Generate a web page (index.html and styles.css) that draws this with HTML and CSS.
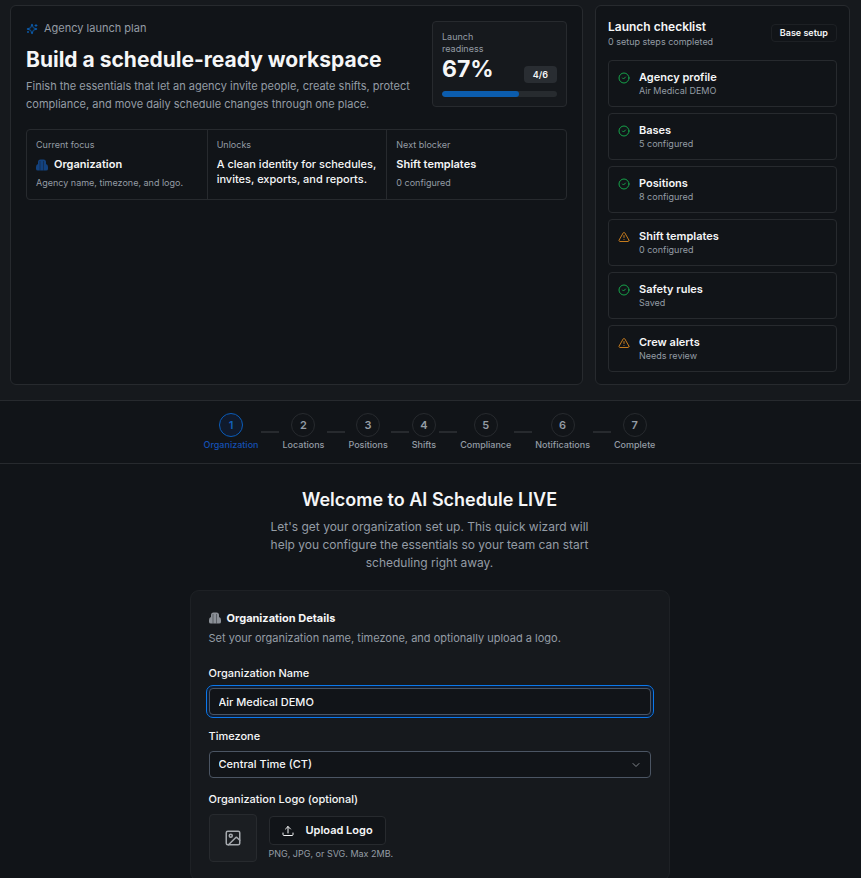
FILE: index.html
```html
<!DOCTYPE html>
<html lang="en">
<head>
<meta charset="utf-8">
<meta name="viewport" content="width=device-width, initial-scale=1">
<title>Agency setup</title>
<link rel="stylesheet" href="styles.css">
</head>
<body>
<svg class="sprite" aria-hidden="true">
  <symbol id="check" viewBox="0 0 24 24"><circle cx="12" cy="12" r="10"/><path d="m9 12 2 2 4-4"/></symbol>
  <symbol id="warn" viewBox="0 0 24 24"><path d="m21.73 18-8-14a2 2 0 0 0-3.48 0l-8 14A2 2 0 0 0 4 21h16a2 2 0 0 0 1.73-3Z"/><path d="M12 9v4M12 17h.01"/></symbol>
  <symbol id="building" viewBox="0 0 24 24"><path class="solid" d="M4 23V6q0-5 5-5h6q5 0 5 5v17Z"/><path class="solid" d="M4 10q-4 1-4 6v4q0 3 4 3ZM20 10q4 1 4 6v4q0 3-4 3Z"/><path class="seam" d="M8 4v19M15 4v19"/></symbol>
</svg>
<header class="overview">
  <section class="panel plan">
    <div class="plan-top">
      <div class="intro">
        <p class="eyebrow"><svg class="icon spark" viewBox="0 0 24 24" aria-hidden="true"><path d="M9.94 15.5A2 2 0 0 0 8.5 14.06l-6.14-1.58a.5.5 0 0 1 0-.96L8.5 9.94A2 2 0 0 0 9.94 8.5l1.58-6.14a.5.5 0 0 1 .96 0l1.58 6.14a2 2 0 0 0 1.44 1.44l6.14 1.58a.5.5 0 0 1 0 .96l-6.14 1.58a2 2 0 0 0-1.44 1.44l-1.58 6.14a.5.5 0 0 1-.96 0zM20 3v4M22 5h-4M4 17v2M5 18H3"/></svg>Agency launch plan</p>
        <h1>Build a schedule-ready workspace</h1>
        <p class="lead">Finish the essentials that let an agency invite people, create shifts, protect compliance, and move daily schedule changes through one place.</p>
      </div>
      <div class="readiness">
        <p class="small">Launch<br>readiness</p>
        <div class="score"><strong>67%</strong><span class="count">4/6</span></div>
        <div class="track"><div class="fill" style="width:67%"></div></div>
      </div>
    </div>
    <div class="facts">
      <div class="fact"><p class="small">Current focus</p><p class="value strong"><svg class="icon building blue" aria-hidden="true"><use href="#building"/></svg>Organization</p><p class="small">Agency name, timezone, and logo.</p></div>
      <div class="fact"><p class="small">Unlocks</p><p class="value">A clean identity for schedules, invites, exports, and reports.</p></div>
      <div class="fact"><p class="small">Next blocker</p><p class="value strong">Shift templates</p><p class="small">0 configured</p></div>
    </div>
  </section>
  <section class="panel checklist">
    <div class="checklist-head">
      <div><h2>Launch checklist</h2><p class="small">0 setup steps completed</p></div>
      <span class="tag">Base setup</span>
    </div>
    <ul>
      <li><svg class="icon ok" aria-hidden="true"><use href="#check"/></svg><div><h3>Agency profile</h3><p class="small">Air Medical DEMO</p></div></li>
      <li><svg class="icon ok" aria-hidden="true"><use href="#check"/></svg><div><h3>Bases</h3><p class="small">5 configured</p></div></li>
      <li><svg class="icon ok" aria-hidden="true"><use href="#check"/></svg><div><h3>Positions</h3><p class="small">8 configured</p></div></li>
      <li><svg class="icon todo" aria-hidden="true"><use href="#warn"/></svg><div><h3>Shift templates</h3><p class="small">0 configured</p></div></li>
      <li><svg class="icon ok" aria-hidden="true"><use href="#check"/></svg><div><h3>Safety rules</h3><p class="small">Saved</p></div></li>
      <li><svg class="icon todo" aria-hidden="true"><use href="#warn"/></svg><div><h3>Crew alerts</h3><p class="small">Needs review</p></div></li>
    </ul>
  </section>
</header>
<nav class="steps" aria-label="Setup steps">
  <div class="step current"><span class="num">1</span><span>Organization</span></div><i class="link"></i>
  <div class="step"><span class="num">2</span><span>Locations</span></div><i class="link"></i>
  <div class="step"><span class="num">3</span><span>Positions</span></div><i class="link"></i>
  <div class="step"><span class="num">4</span><span>Shifts</span></div><i class="link"></i>
  <div class="step"><span class="num">5</span><span>Compliance</span></div><i class="link"></i>
  <div class="step"><span class="num">6</span><span>Notifications</span></div><i class="link"></i>
  <div class="step"><span class="num">7</span><span>Complete</span></div>
</nav>
<main>
  <h2 class="welcome">Welcome to AI Schedule LIVE</h2>
  <p class="welcome-text">Let's get your organization set up. This quick wizard will help you configure the essentials so your team can start scheduling right away.</p>
  <form class="card">
    <h3 class="card-title"><svg class="icon building" aria-hidden="true"><use href="#building"/></svg>Organization Details</h3>
    <p class="card-text">Set your organization name, timezone, and optionally upload a logo.</p>
    <div class="field">
      <label for="name">Organization Name</label>
      <input id="name" class="control focused" type="text" value="Air Medical DEMO">
    </div>
    <div class="field">
      <label for="zone">Timezone</label>
      <div class="select">
        <select id="zone" class="control"><option>Central Time (CT)</option></select>
        <svg class="icon chevron" viewBox="0 0 24 24" aria-hidden="true"><path d="m6 9 6 6 6-6"/></svg>
      </div>
    </div>
    <div class="field">
      <label for="upload">Organization Logo (optional)</label>
      <div class="logo-row">
        <div class="preview"><svg class="icon image" viewBox="0 0 24 24" aria-hidden="true"><rect x="3" y="3" width="18" height="18" rx="2"/><circle cx="9" cy="9" r="2"/><path d="m21 15-3.1-3.1a2 2 0 0 0-2.8 0L6 21"/></svg></div>
        <div>
          <button id="upload" type="button"><svg class="icon" viewBox="0 0 24 24" aria-hidden="true"><path d="M12 16V3M7 8l5-5 5 5M2 16v3a2 2 0 0 0 2 2h16a2 2 0 0 0 2-2v-3"/></svg>Upload Logo</button>
          <p class="small">PNG, JPG, or SVG. Max 2MB.</p>
        </div>
      </div>
    </div>
  </form>
</main>
</body>
</html>
```
FILE: styles.css
```css
* { box-sizing: border-box; margin: 0; padding: 0; }
:root {
  --bg: #111418;
  --raised: #16191d;
  --line: #272a2e;
  --text: #f5f6f7;
  --muted: #949ca5;
  --blue: #0b5cad;
}
html { overflow: hidden; }
body { background: var(--bg); color: var(--text); font: 11px/15px Inter, sans-serif; }
ul { list-style: none; }
.sprite { position: absolute; width: 0; height: 0; }
.icon { width: 12px; height: 12px; flex: none; fill: none; stroke: currentColor; stroke-width: 2; stroke-linecap: round; stroke-linejoin: round; }
.small { font-size: 9px; line-height: 12px; color: var(--muted); }

.overview { display: grid; grid-template-columns: minmax(0, 1fr) 255px; gap: 12px; padding: 5px 11px 15px 10px; background: var(--raised); border-bottom: 1px solid var(--line); }
.panel { background: var(--bg); border: 1px solid var(--line); border-radius: 6px; }
.plan { padding: 15px; }
.plan-top { display: flex; justify-content: space-between; gap: 16px; margin-bottom: 16px; }
.intro { flex: 1; }
.eyebrow { display: flex; align-items: center; gap: 6px; color: var(--muted); }
.spark { color: var(--blue); }
h1 { margin-top: 9px; font-size: 21px; line-height: 30px; font-weight: 700; }
.lead { margin-top: 2px; line-height: 18px; color: var(--muted); }
.readiness { width: 135px; height: 86px; padding: 9px; background: var(--raised); border: 1px solid var(--line); border-radius: 4px; }
.score { display: flex; justify-content: space-between; align-items: flex-end; height: 28px; }
.score strong { font-size: 23px; line-height: 28px; }
.count { padding: 2px 9px; border-radius: 4px; background: #292d32; font-size: 9px; line-height: 13px; font-weight: 600; }
.track { height: 6px; margin-top: 8px; border-radius: 3px; background: #272b2f; overflow: hidden; }
.fill { height: 100%; border-radius: 3px; background: var(--blue); }
.facts { display: grid; grid-template-columns: repeat(3, 1fr); border: 1px solid var(--line); border-radius: 4px; }
.fact { padding: 9px 9px 10px; }
.fact + .fact { border-left: 1px solid var(--line); }
.value { display: flex; align-items: center; gap: 6px; margin-top: 6px; font-weight: 500; }
.strong { margin-bottom: 5px; font-weight: 600; }
.building { color: #8b9097; }
.building.blue { color: #13427f; }
.solid { fill: currentColor; stroke: none; }
.seam { stroke: var(--bg); stroke-opacity: .4; stroke-linecap: butt; }

.checklist { padding: 12px; }
.checklist-head { display: flex; justify-content: space-between; align-items: center; margin-bottom: 12px; }
.checklist-head h2 { font-size: 12px; line-height: 18px; font-weight: 600; }
.tag { padding: 1px 8px; border: 1px solid #1d2024; border-radius: 4px; font-size: 9px; line-height: 14px; font-weight: 600; }
.checklist ul { display: grid; gap: 6px; }
.checklist li { display: flex; gap: 9px; padding: 9px; border: 1px solid var(--line); border-radius: 4px; }
.checklist li .icon { margin-top: 2px; }
.checklist h3 { font-size: 11px; line-height: 15px; font-weight: 600; }
.ok { color: #16a34a; }
.todo { color: #c57b1d; }

.steps { display: flex; justify-content: center; align-items: center; gap: 3px; padding: 12px 2px 12px 0; border-bottom: 1px solid var(--line); }
.step { display: flex; flex-direction: column; align-items: center; gap: 2px; font-size: 9px; line-height: 12px; font-weight: 500; color: var(--muted); }
.num { display: grid; place-items: center; width: 24px; height: 24px; border: 1px solid var(--line); border-radius: 50%; font-size: 11px; font-weight: 600; }
.link { width: 18px; height: 2px; background: var(--line); }
.current { color: #1450b4; }
.current .num { color: #1261bd; border-color: #0b5cb8; background: #101a2c; }

main { padding: 24px 18px 0 16px; }
.welcome { text-align: center; font-size: 18px; line-height: 24px; font-weight: 600; }
.welcome-text { max-width: 336px; margin: 6px auto 18px; text-align: center; font-size: 12px; line-height: 18px; color: var(--muted); }
.card { max-width: 480px; margin: 0 auto; padding: 18px; background: var(--raised); border: 1px solid #1e2125; border-radius: 9px; }
.card-title { display: flex; align-items: center; gap: 6px; font-size: 11px; line-height: 18px; font-weight: 700; }
.card-text { margin-top: 2px; line-height: 18px; color: var(--muted); }
.field { margin-top: 14px; }
.card-text + .field { margin-top: 19px; }
label { display: block; line-height: 15px; margin-bottom: 7px; font-weight: 500; }
.control { display: block; width: 100%; height: 27px; padding: 0 9px; border: 1px solid #4b5563; border-radius: 4px; background: var(--bg); color: var(--text); font: 500 11px/15px Inter, sans-serif; appearance: none; }
.focused { outline: 1px solid #0b78ec; outline-offset: 2px; box-shadow: 0 0 0 2px #0f1d33; }
.select { display: grid; align-items: center; }
.select > * { grid-area: 1 / 1; }
.chevron { justify-self: end; margin-right: 9px; color: #80858b; pointer-events: none; }
.logo-row { display: flex; align-items: center; gap: 12px; }
.preview { display: grid; place-items: center; width: 48px; height: 48px; border: 1px solid var(--line); border-radius: 4px; background: #1b1e22; color: #a5a9ae; }
.image { width: 18px; height: 18px; }
button { display: flex; align-items: center; gap: 12px; height: 29px; padding: 0 12px; margin-bottom: 3px; border: 1px solid var(--line); border-radius: 4px; background: var(--bg); color: var(--text); font: 600 11px/15px Inter, sans-serif; }
```
